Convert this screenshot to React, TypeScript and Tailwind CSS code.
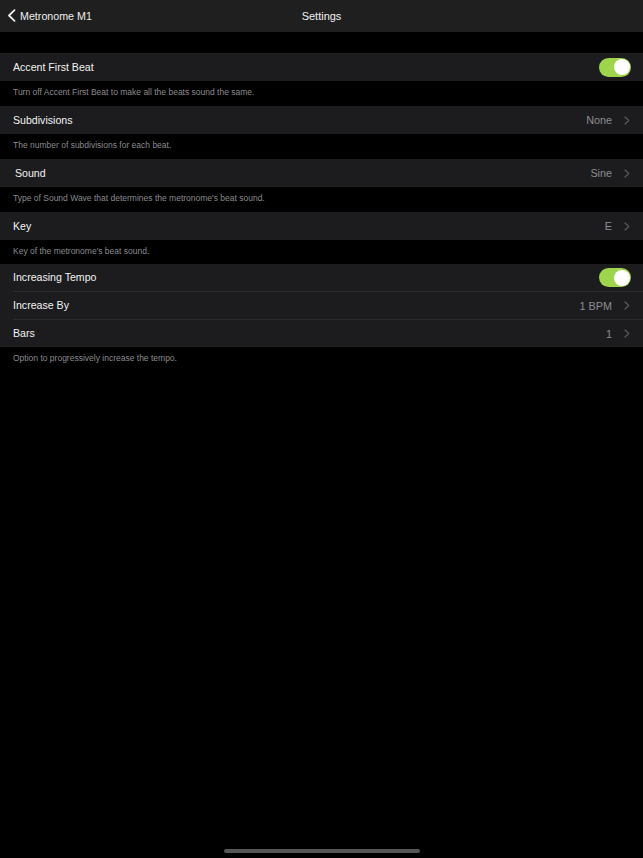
type Row = {
  label: string;
  value?: string;
  toggle?: boolean;
  indent?: string;
};

type Section = {
  rows: Row[];
  footer: string;
  gap?: string;
};

const sections: Section[] = [
  {
    rows: [{ label: 'Accent First Beat', toggle: true }],
    footer: 'Turn off Accent First Beat to make all the beats sound the same.',
  },
  {
    rows: [{ label: 'Subdivisions', value: 'None' }],
    footer: 'The number of subdivisions for each beat.',
  },
  {
    rows: [{ label: 'Sound', value: 'Sine', indent: 'pl-[15px]' }],
    footer: "Type of Sound Wave that determines the metronome's beat sound.",
  },
  {
    rows: [{ label: 'Key', value: 'E' }],
    footer: "Key of the metronome's beat sound.",
    gap: 'h-[24px]',
  },
  {
    rows: [
      { label: 'Increasing Tempo', toggle: true },
      { label: 'Increase By', value: '1 BPM' },
      { label: 'Bars', value: '1' },
    ],
    footer: 'Option to progressively increase the tempo.',
  },
];

// disclosure arrow at the end of a row
const Disclosure = () => (
  <svg width="6" height="9" viewBox="0 0 6 9" className="text-[#5a5a5f]">
    <path d="M1 1 L4.8 4.5 L1 8" fill="none" stroke="currentColor" strokeWidth="1.2" strokeLinecap="round" strokeLinejoin="round" />
  </svg>
);

const BackArrow = () => (
  <svg width="9" height="13" viewBox="0 0 9 13" className="text-[#ececec]">
    <path d="M7.5 1.2 L2 6.5 L7.5 11.8" fill="none" stroke="currentColor" strokeWidth="1.8" strokeLinecap="round" strokeLinejoin="round" />
  </svg>
);

const Toggle = () => (
  <div className="w-[32px] h-[19px] rounded-full bg-[#9fd54c] flex items-center justify-end pr-[1.5px]">
    <div className="w-[16px] h-[16px] rounded-full bg-white" />
  </div>
);

const SettingsRow = ({ row, grouped }: { row: Row; grouped: boolean }) => (
  <div className={`${grouped ? 'h-[27px]' : 'h-[28px]'} flex items-center ${row.toggle ? 'pr-[12px]' : 'pr-[13px]'} ${row.indent ?? 'pl-[13px]'}`}>
    <span className="flex-1 pt-[1px] text-[10.6px] text-[#f2f2f2]">{row.label}</span>
    {row.toggle ? (
      <Toggle />
    ) : (
      <div className="flex items-center gap-[12px]">
        <span className="pt-[1px] text-[10.8px] text-[#8d8d92]">{row.value}</span>
        <Disclosure />
      </div>
    )}
  </div>
);

export default function App() {
  return (
    <div
      className="w-[643px] h-[858px] bg-black flex flex-col"
      style={{ fontFamily: '"Liberation Sans", Arial, sans-serif' }}
    >
      <div className="h-[32px] bg-[#1f1f1f] relative flex items-center">
        <div className="flex items-center pl-[7px] gap-[4px] text-[#ededed]">
          <BackArrow />
          <span className="text-[10.7px]">Metronome M1</span>
        </div>
        <span className="absolute left-0 right-0 text-center text-[11px] text-[#f0f0f0] pointer-events-none">
          Settings
        </span>
      </div>

      <div className="h-[21px]" />

      {sections.map((section, i) => (
        <div key={i}>
          <div className="bg-[#1c1c1e]">
            {section.rows.map((row, j) => (
              <div key={row.label}>
                {j > 0 && <div className="ml-[13px] h-px bg-[#2c2c2e]" />}
                <SettingsRow row={row} grouped={section.rows.length > 1} />
              </div>
            ))}
          </div>
          <div className={`${section.gap ?? 'h-[25px]'} pl-[13px] pt-[5px] text-[8.5px] text-[#8a8a8e]`}>
            {section.footer}
          </div>
        </div>
      ))}

      <div className="flex-1" />
      <div className="flex justify-center pb-[5px]">
        <div className="w-[196px] h-[4px] rounded-full bg-[#565656]" />
      </div>
    </div>
  );
}
